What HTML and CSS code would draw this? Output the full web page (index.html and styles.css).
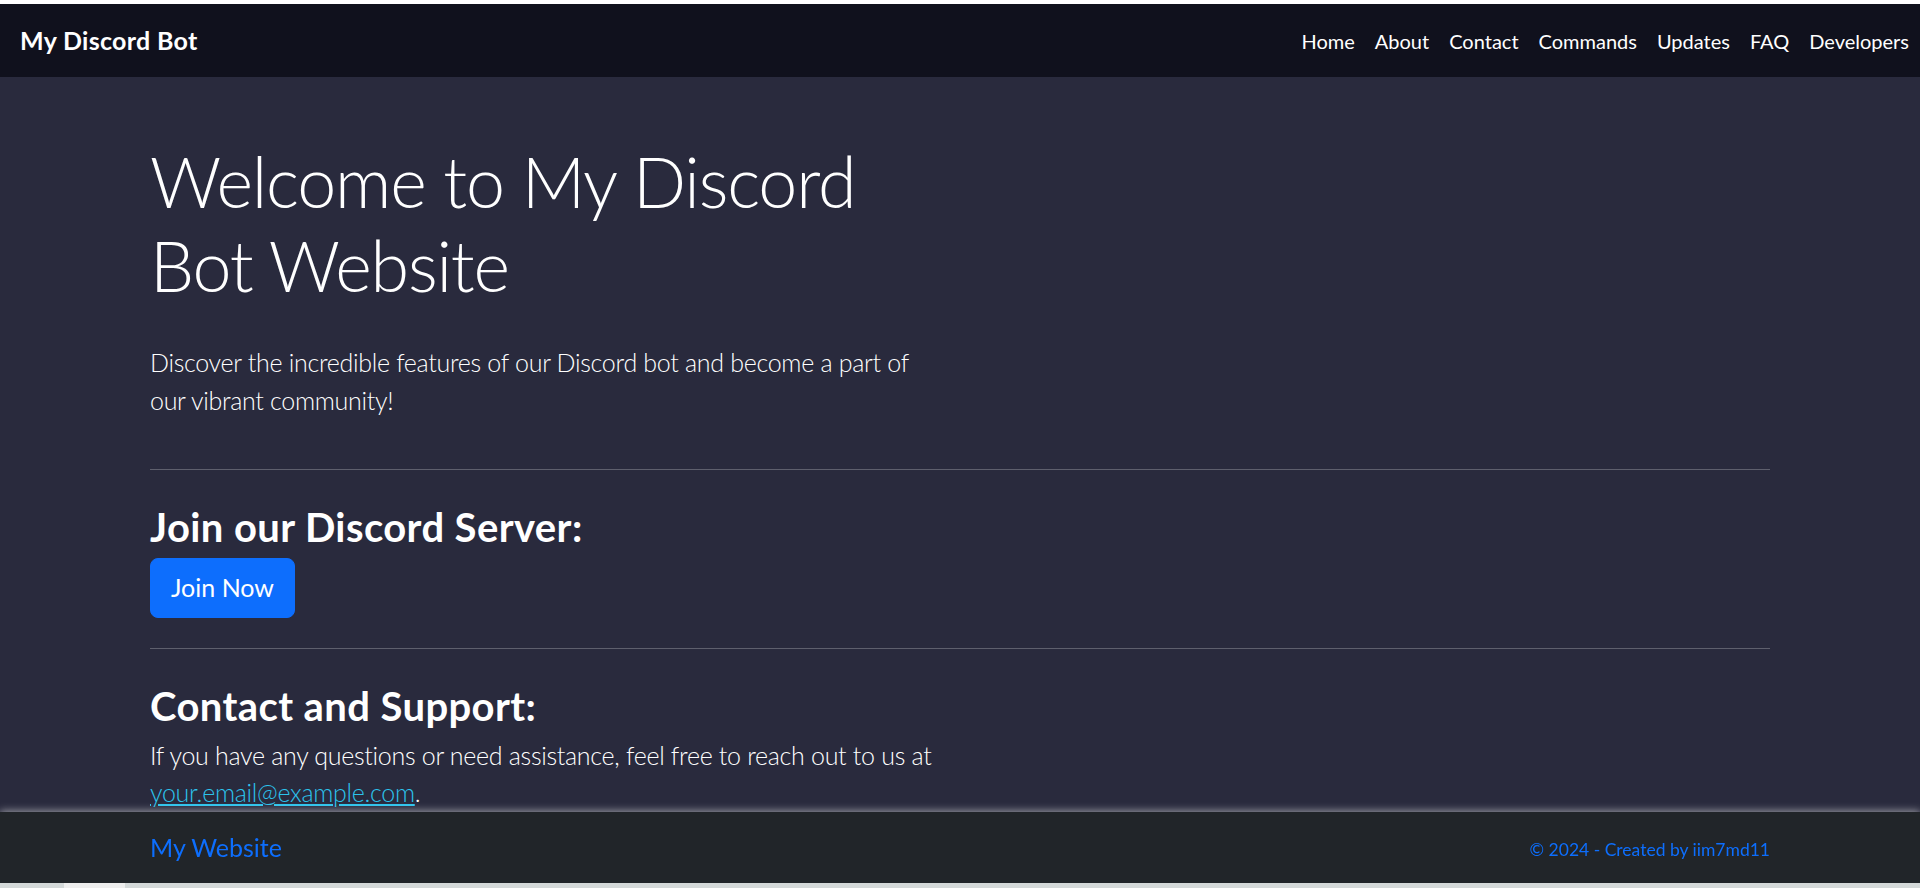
FILE: index.html
```html
<!DOCTYPE html>
<html lang="en">
<head>
<meta charset="utf-8">
<title>My Discord Bot</title>
<link rel="stylesheet" href="styles.css">
</head>
<body>
  <nav class="navbar">
    <a class="brand" href="#">My Discord Bot</a>
    <ul class="nav-links">
      <li><a href="#">Home</a></li>
      <li><a href="#">About</a></li>
      <li><a href="#">Contact</a></li>
      <li><a href="#">Commands</a></li>
      <li><a href="#">Updates</a></li>
      <li><a href="#">FAQ</a></li>
      <li><a href="#">Developers</a></li>
    </ul>
  </nav>

  <main class="container">
    <section class="hero">
      <div class="col-half">
        <h1 class="display">Welcome to My Discord Bot Website</h1>
        <p class="lead">Discover the incredible features of our Discord bot and become a part of our vibrant community!</p>
      </div>
    </section>
    <hr class="divider">
    <section class="block">
      <h2 class="section-title">Join our Discord Server:</h2>
      <a class="btn-primary" href="#">Join Now</a>
    </section>
    <hr class="divider">
    <section class="block">
      <div class="col-half">
        <h2 class="section-title">Contact and Support:</h2>
        <p class="lead">If you have any questions or need assistance, feel free to reach out to us at <a class="email" href="#">your.email@example.com</a>.</p>
      </div>
    </section>
  </main>

  <footer class="footer">
    <div class="footer-inner">
      <a class="footer-brand" href="#">My Website</a>
      <span class="footer-copy">© 2024 - Created by iim7md11</span>
    </div>
  </footer>
  <div class="hscroll"><div class="hscroll-thumb"></div></div>
</body>
</html>
```

FILE: styles.css
```css
* { box-sizing: border-box; }

html, body {
  margin: 0;
  padding: 0;
}

html { background: #ffffff; }

body {
  background: #292a3d;
  border-top: 4px solid #ffffff;
  min-height: 888px;
  font-family: "Lato", "Open Sans", sans-serif;
  color: #ffffff;
  font-size: 20px;
  line-height: 1.5;
}

a { text-decoration: none; }

/* Navbar */
.navbar {
  height: 73px;
  background: #10111d;
  display: flex;
  align-items: center;
  justify-content: space-between;
  padding: 0 1px 0 20px;
}

.brand {
  color: #ffffff;
  font-weight: 700;
  font-size: 25px;
  line-height: 1.5;
  letter-spacing: 0.3px;
}

.nav-links {
  list-style: none;
  display: flex;
  margin: 0;
  padding: 0;
}

.nav-links a {
  display: block;
  color: #ffffff;
  font-size: 20px;
  padding: 0 10px;
  line-height: 1.5;
}

/* Main */
.container {
  width: 1650px;
  margin: 0 auto;
  padding: 62px 15px 120px;
}

.hero { padding-bottom: 20px; }

.col-half {
  width: 795px;
}

.display {
  margin: 0 0 37px;
  font-size: 70px;
  font-weight: 300;
  line-height: 1.2;
  letter-spacing: -1.2px;
}

.lead {
  margin: 0;
  font-size: 25px;
  font-weight: 300;
  line-height: 1.5;
  letter-spacing: -0.3px;
}

.divider {
  margin: 30px 0;
  border: 0;
  border-top: 1px solid rgba(255, 255, 255, 0.25);
  height: 0;
}

.block { margin: 0; }

.section-title {
  margin: 0;
  padding: 3px 0 7px;
  font-size: 40px;
  font-weight: 700;
  line-height: 1.2;
  letter-spacing: 0.4px;
}

.btn-primary {
  display: inline-block;
  background: #0d6efd;
  border: 1px solid #0d6efd;
  color: #ffffff;
  font-size: 25px;
  line-height: 1.5;
  padding: 10px 20px;
  border-radius: 8px;
}

.email {
  color: #2cc3ec;
  text-decoration: underline;
  text-underline-offset: 2px;
}

/* Footer */
.footer {
  position: fixed;
  left: 0;
  right: 0;
  bottom: 5px;
  height: 71px;
  background: #212529;
  box-shadow: 0 -1px 8px rgba(255, 255, 255, 0.55);
}

.footer-inner {
  width: 1650px;
  height: 100%;
  margin: 0 auto;
  padding: 0 15px;
  display: flex;
  align-items: center;
  justify-content: space-between;
}

.footer-brand {
  color: #0d6efd;
  font-size: 25px;
  line-height: 1.5;
}

.footer-copy {
  color: #0d6efd;
  font-size: 17.5px;
  line-height: 1.5;
  padding-top: 5px;
}

.hscroll {
  position: fixed;
  left: 0;
  right: 0;
  bottom: 0;
  height: 5px;
  background: #d4d9d9;
}

.hscroll-thumb {
  margin-left: 64px;
  width: 61px;
  height: 100%;
  background: #eeeeee;
}
```
